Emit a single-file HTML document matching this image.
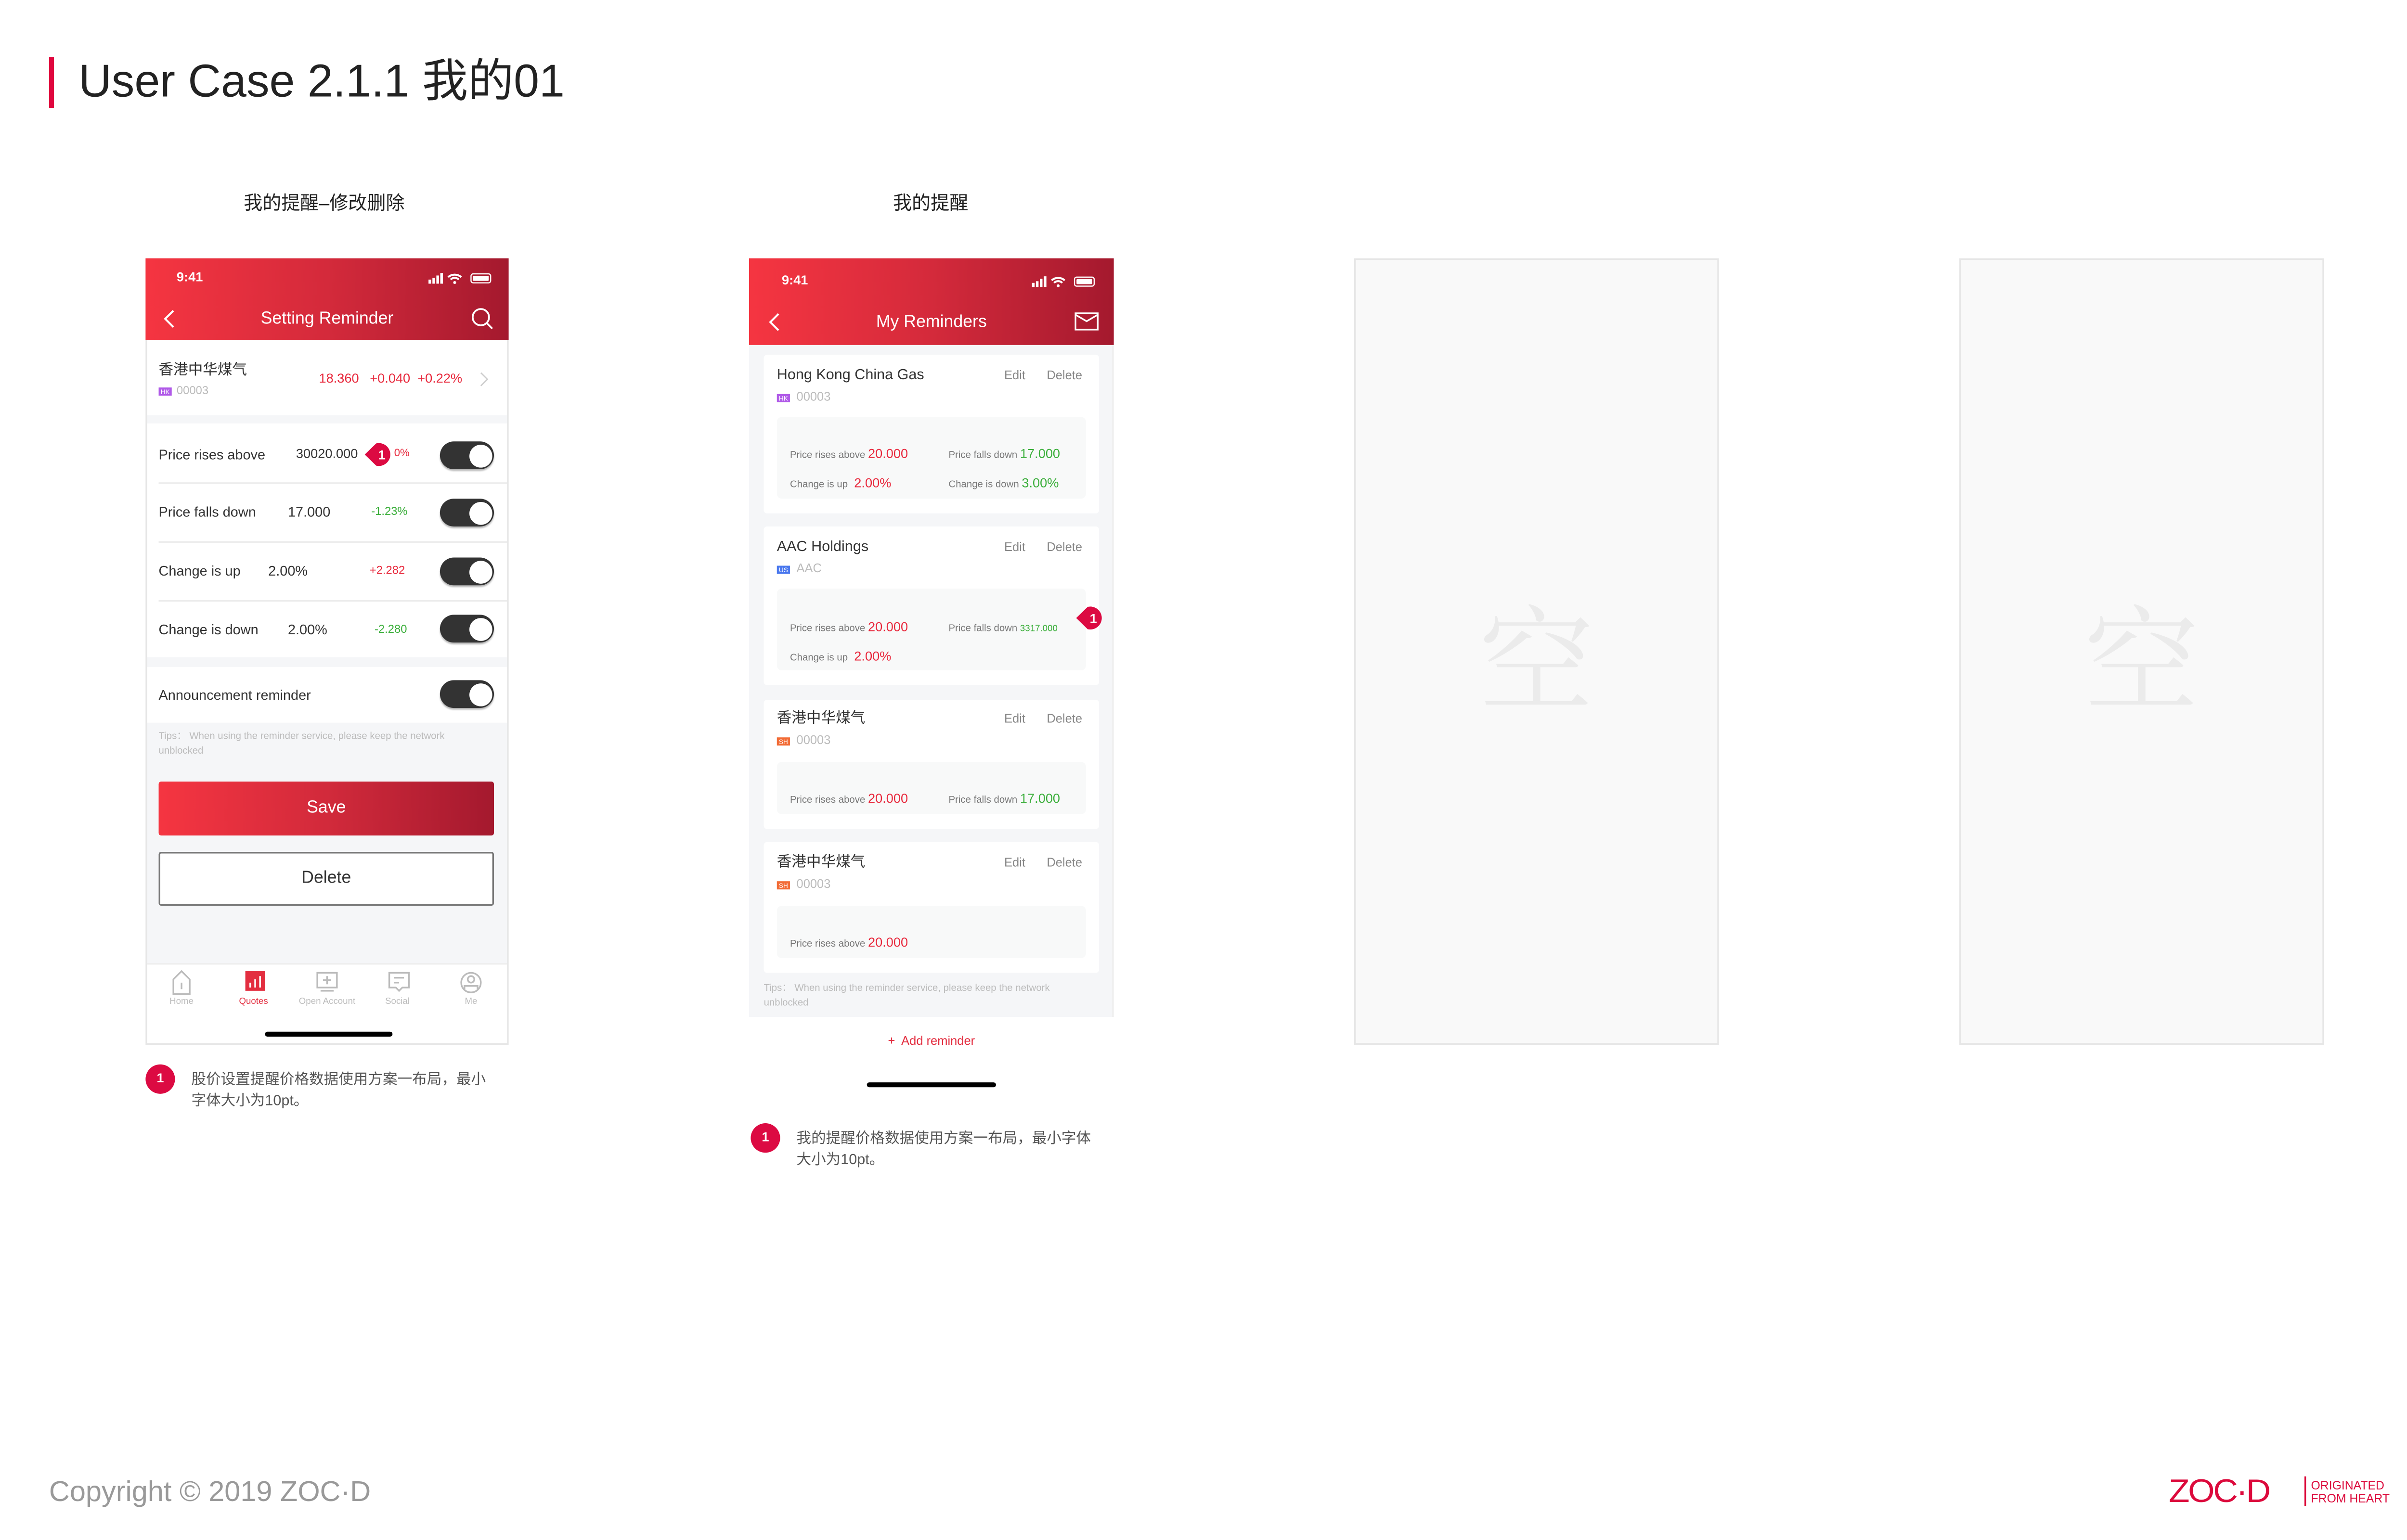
<!DOCTYPE html>
<html><head><meta charset="utf-8">
<style>
*{margin:0;padding:0;box-sizing:border-box}
html,body{width:5300px;height:3200px;overflow:hidden;background:#fff}
#w{position:absolute;left:0;top:0;width:1560px;height:942px;transform:scale(3.3974);transform-origin:0 0;font-family:"Liberation Sans","Noto Sans CJK SC",sans-serif;color:#333}
.a{position:absolute;white-space:nowrap}
.t{position:absolute;white-space:nowrap;line-height:1}
.hdr{background:linear-gradient(90deg,#f53541,#d42a3b 50%,#a4192e)}
.tog{position:absolute;width:33px;height:17px;border-radius:9px;background:#333;box-shadow:0 1px 1px rgba(0,0,0,.3)}
.tog:after{content:"";position:absolute;right:1.5px;top:1.5px;width:14px;height:14px;border-radius:50%;background:#fff}
.sep{position:absolute;height:1px;background:#ececec}
.badge{position:absolute;height:5px;width:8px;font-size:4px;line-height:5px;color:#fff;text-align:center}
.card{position:absolute;left:467px;width:205px;background:#fff;border-radius:2px}
.box{position:absolute;left:8px;width:189px;background:#f8f9f9;border-radius:3px}
.lb{font-size:6px;color:#777}
.red{color:#e8283c}.grn{color:#3aae3a}
.mk{position:absolute;width:18px;height:18px}
</style></head><body><div id="w">

<!-- Title -->
<div class="a" style="left:30px;top:35px;width:3px;height:31px;background:#e0063f"></div>
<div class="t" style="left:48px;top:36px;font-size:28px;color:#222">User Case 2.1.1 我的01</div>

<div class="t" style="left:149px;top:120px;font-size:11.5px;color:#222">我的提醒–修改删除</div>
<div class="t" style="left:546px;top:120px;font-size:11.5px;color:#222">我的提醒</div>

<!-- ========== Phone 1 ========== -->
<div class="a" style="left:89px;top:158px;width:222px;height:481px;background:#f5f6f8;border:1px solid #e6e6e6"></div>
<div class="a hdr" style="left:89px;top:158px;width:222px;height:50px"></div>
<div class="t" style="left:108px;top:166px;font-size:8px;font-weight:bold;color:#fff">9:41</div>
<svg class="a" style="left:261px;top:166px" width="42" height="9" viewBox="0 0 42 9">
 <rect x="1" y="5" width="1.6" height="2.5" fill="#fff"/><rect x="3.4" y="4" width="1.6" height="3.5" fill="#fff"/><rect x="5.8" y="2.5" width="1.6" height="5" fill="#fff"/><rect x="8.2" y="1" width="1.6" height="6.5" fill="#fff"/>
 <path d="M13 3.5a6 6 0 0 1 8 0M14.5 5a3.5 3.5 0 0 1 5 0" stroke="#fff" stroke-width="1.2" fill="none"/><circle cx="17" cy="6.8" r="0.9" fill="#fff"/>
 <rect x="27" y="1.5" width="12" height="5.5" rx="1.3" fill="none" stroke="#fff" stroke-width=".7"/><rect x="28.2" y="2.7" width="9.6" height="3.1" rx=".6" fill="#fff"/>
</svg>
<svg class="a" style="left:99px;top:189px" width="10" height="12" viewBox="0 0 10 12"><path d="M7 1L2 6l5 5" stroke="#fff" stroke-width="1.2" fill="none"/></svg>
<div class="t" style="left:89px;width:222px;text-align:center;top:190px;font-size:10.5px;color:#fff">Setting Reminder</div>
<svg class="a" style="left:288px;top:188px" width="14" height="14" viewBox="0 0 14 14"><circle cx="6" cy="6" r="5" stroke="#fff" stroke-width="1.1" fill="none"/><path d="M9.6 9.6L13 13" stroke="#fff" stroke-width="1.1"/></svg>

<div class="a" style="left:90px;top:208px;width:220px;height:46px;background:#fff"></div>
<div class="t" style="left:97px;top:222px;font-size:9px;color:#333">香港中华煤气</div>
<div class="badge" style="left:97px;top:237px;background:#b05ae8">HK</div>
<div class="t" style="left:108px;top:236px;font-size:7px;color:#bbb">00003</div>
<div class="t red" style="left:195px;top:228px;font-size:8px">18.360&nbsp;&nbsp;&nbsp;+0.040&nbsp;&nbsp;+0.22%</div>
<svg class="a" style="left:293px;top:227px" width="6" height="10" viewBox="0 0 6 10"><path d="M1 1l4 4-4 4" stroke="#ccc" stroke-width=".8" fill="none"/></svg>

<div class="a" style="left:90px;top:259px;width:220px;height:143px;background:#fff"></div>
<div class="sep" style="left:97px;top:295px;width:213px"></div>
<div class="sep" style="left:97px;top:331px;width:213px"></div>
<div class="sep" style="left:97px;top:367px;width:213px"></div>
<div class="t" style="left:97px;top:274px;font-size:8.5px">Price rises above</div>
<div class="t" style="left:181px;top:274px;font-size:8px">30020.000</div>
<div class="t red" style="left:241px;top:275px;font-size:6.5px">0%</div>
<div class="t" style="left:97px;top:309px;font-size:8.5px">Price falls down</div>
<div class="t" style="left:176px;top:309px;font-size:8.5px">17.000</div>
<div class="t grn" style="left:227px;top:310px;font-size:7px">-1.23%</div>
<div class="t" style="left:97px;top:345px;font-size:8.5px">Change is up</div>
<div class="t" style="left:164px;top:345px;font-size:8.5px">2.00%</div>
<div class="t red" style="left:226px;top:346px;font-size:7px">+2.282</div>
<div class="t" style="left:97px;top:381px;font-size:8.5px">Change is down</div>
<div class="t" style="left:176px;top:381px;font-size:8.5px">2.00%</div>
<div class="t grn" style="left:229px;top:382px;font-size:7px">-2.280</div>
<div class="tog" style="left:269px;top:270px"></div>
<div class="tog" style="left:269px;top:305px"></div>
<div class="tog" style="left:269px;top:341px"></div>
<div class="tog" style="left:269px;top:376px"></div>

<div class="a" style="left:90px;top:408px;width:220px;height:34px;background:#fff"></div>
<div class="t" style="left:97px;top:421px;font-size:8.5px">Announcement reminder</div>
<div class="tog" style="left:269px;top:416px"></div>
<div class="t" style="left:97px;top:447px;font-size:6px;color:#bbb;line-height:9px">Tips：&nbsp;When using the reminder service, please keep the network<br>unblocked</div>

<div class="a" style="left:97px;top:478px;width:205px;height:33px;border-radius:1.5px;background:linear-gradient(90deg,#f53541,#d22a3b 50%,#a4192e)"></div>
<div class="t" style="left:97px;width:205px;text-align:center;top:489px;font-size:10.5px;color:#fff">Save</div>
<div class="a" style="left:97px;top:521px;width:205px;height:33px;border:1px solid #777;border-radius:1.5px;background:#fff"></div>
<div class="t" style="left:97px;width:205px;text-align:center;top:532px;font-size:10.5px;color:#333">Delete</div>

<div class="a" style="left:90px;top:589px;width:220px;height:49px;background:#fff;border-top:1px solid #eee"></div>
<svg class="a" style="left:90px;top:593px" width="220" height="16" viewBox="0 0 220 16" fill="none" stroke="#bbb" stroke-width="1">
 <path d="M16 15V6l5-5 5 5v9z M21 8v4"/>
 <rect x="60" y="1" width="12" height="12" fill="#e32e40" stroke="none"/><path d="M63 11v-3M66 11v-5M69 11v-7" stroke="#fff"/>
 <path d="M104 2h12v9h-12z M110 4v5M107.5 6.5h5 M106 13h8"/>
 <path d="M148 2h12v9h-4l-2 2-2-2h-4z M151 5h6M151 8h3"/>
 <circle cx="198" cy="8" r="6"/><circle cx="198" cy="6" r="2"/><path d="M194 12v-2h8v2"/>
</svg>
<div class="t" style="left:90px;width:42px;text-align:center;top:611px;font-size:5.5px;color:#bbb">Home</div>
<div class="t" style="left:134px;width:42px;text-align:center;top:611px;font-size:5.5px;color:#e32e40">Quotes</div>
<div class="t" style="left:174px;width:52px;text-align:center;top:611px;font-size:5.5px;color:#bbb">Open Account</div>
<div class="t" style="left:222px;width:42px;text-align:center;top:611px;font-size:5.5px;color:#bbb">Social</div>
<div class="t" style="left:267px;width:42px;text-align:center;top:611px;font-size:5.5px;color:#bbb">Me</div>
<div class="a" style="left:162px;top:631px;width:78px;height:2.5px;border-radius:2px;background:#000"></div>

<!-- marker 1 -->
<svg class="mk" style="left:222px;top:269px" viewBox="0 0 18 18"><path d="M1 9L8 2.2A7 7 0 1 1 8 15.8z" fill="#dc0a42"/><text x="11.5" y="12" font-size="8" fill="#fff" text-anchor="middle" font-family="Liberation Sans" font-weight="bold">1</text></svg>

<div class="a" style="left:89px;top:651px;width:18px;height:18px;border-radius:50%;background:#dc0a42"></div>
<div class="t" style="left:89px;width:18px;text-align:center;top:656px;font-size:8px;color:#fff;font-weight:bold">1</div>
<div class="t" style="left:117px;top:654px;font-size:9px;color:#555;line-height:13px">股价设置提醒价格数据使用方案一布局，最小<br>字体大小为10pt。</div>

<!-- ========== Phone 2 ========== -->
<div class="a" style="left:458px;top:158px;width:223px;height:464px;background:#f5f6f8;border-right:1px solid #eee"></div>
<div class="a" style="left:458px;top:622px;width:223px;height:50px;background:#fff"></div>
<div class="a hdr" style="left:458px;top:158px;width:223px;height:53px"></div>
<div class="t" style="left:478px;top:168px;font-size:8px;font-weight:bold;color:#fff">9:41</div>
<svg class="a" style="left:630px;top:168px" width="42" height="9" viewBox="0 0 42 9">
 <rect x="1" y="5" width="1.6" height="2.5" fill="#fff"/><rect x="3.4" y="4" width="1.6" height="3.5" fill="#fff"/><rect x="5.8" y="2.5" width="1.6" height="5" fill="#fff"/><rect x="8.2" y="1" width="1.6" height="6.5" fill="#fff"/>
 <path d="M13 3.5a6 6 0 0 1 8 0M14.5 5a3.5 3.5 0 0 1 5 0" stroke="#fff" stroke-width="1.2" fill="none"/><circle cx="17" cy="6.8" r="0.9" fill="#fff"/>
 <rect x="27" y="1.5" width="12" height="5.5" rx="1.3" fill="none" stroke="#fff" stroke-width=".7"/><rect x="28.2" y="2.7" width="9.6" height="3.1" rx=".6" fill="#fff"/>
</svg>
<svg class="a" style="left:469px;top:191px" width="10" height="12" viewBox="0 0 10 12"><path d="M7 1L2 6l5 5" stroke="#fff" stroke-width="1.2" fill="none"/></svg>
<div class="t" style="left:458px;width:223px;text-align:center;top:192px;font-size:10.5px;color:#fff">My Reminders</div>
<svg class="a" style="left:657px;top:191px" width="15" height="12" viewBox="0 0 15 12"><rect x=".6" y=".6" width="13.6" height="10" fill="none" stroke="#fff" stroke-width="1"/><path d="M.6 1.5l6.8 4 6.8-4" stroke="#fff" stroke-width="1" fill="none"/></svg>

<!-- card 1 -->
<div class="card" style="top:217px;height:97px">
 <div class="box" style="top:38px;height:50px"></div>
</div>
<div class="t" style="left:475px;top:225px;font-size:9px">Hong Kong China Gas</div>
<div class="t" style="left:614px;top:226px;font-size:7.5px;color:#888">Edit</div>
<div class="t" style="left:640px;top:226px;font-size:7.5px;color:#888">Delete</div>
<div class="badge" style="left:475px;top:241px;background:#b05ae8">HK</div>
<div class="t" style="left:487px;top:239px;font-size:7.5px;color:#bbb">00003</div>
<div class="t" style="left:483px;top:268px"><span class="lb">Price rises above </span><span class="red" style="font-size:8px">20.000</span></div>
<div class="t" style="left:580px;top:268px"><span class="lb">Price falls down </span><span class="grn" style="font-size:8px">17.000</span></div>
<div class="t" style="left:483px;top:286px"><span class="lb">Change is up </span><span class="red" style="font-size:8px">&nbsp;2.00%</span></div>
<div class="t" style="left:580px;top:286px"><span class="lb">Change is down </span><span class="grn" style="font-size:8px">3.00%</span></div>

<!-- card 2 -->
<div class="card" style="top:322px;height:97px">
 <div class="box" style="top:38px;height:50px"></div>
</div>
<div class="t" style="left:475px;top:330px;font-size:9px">AAC Holdings</div>
<div class="t" style="left:614px;top:331px;font-size:7.5px;color:#888">Edit</div>
<div class="t" style="left:640px;top:331px;font-size:7.5px;color:#888">Delete</div>
<div class="badge" style="left:475px;top:346px;background:#4a78ee">US</div>
<div class="t" style="left:487px;top:344px;font-size:7.5px;color:#bbb">AAC</div>
<div class="t" style="left:483px;top:374px"><span class="lb">Price rises above </span><span class="red" style="font-size:8px">20.000</span></div>
<div class="t" style="left:580px;top:374px"><span class="lb">Price falls down </span><span class="grn" style="font-size:5.5px">3317.000</span></div>
<div class="t" style="left:483px;top:392px"><span class="lb">Change is up </span><span class="red" style="font-size:8px">&nbsp;2.00%</span></div>
<svg class="mk" style="left:657px;top:369px" viewBox="0 0 18 18"><path d="M1 9L8 2.2A7 7 0 1 1 8 15.8z" fill="#dc0a42"/><text x="11.5" y="12" font-size="8" fill="#fff" text-anchor="middle" font-family="Liberation Sans" font-weight="bold">1</text></svg>

<!-- card 3 -->
<div class="card" style="top:428px;height:79px">
 <div class="box" style="top:38px;height:32px"></div>
</div>
<div class="t" style="left:475px;top:435px;font-size:9px">香港中华煤气</div>
<div class="t" style="left:614px;top:436px;font-size:7.5px;color:#888">Edit</div>
<div class="t" style="left:640px;top:436px;font-size:7.5px;color:#888">Delete</div>
<div class="badge" style="left:475px;top:451px;background:#f26b35">SH</div>
<div class="t" style="left:487px;top:449px;font-size:7.5px;color:#bbb">00003</div>
<div class="t" style="left:483px;top:479px"><span class="lb">Price rises above </span><span class="red" style="font-size:8px">20.000</span></div>
<div class="t" style="left:580px;top:479px"><span class="lb">Price falls down </span><span class="grn" style="font-size:8px">17.000</span></div>

<!-- card 4 -->
<div class="card" style="top:515px;height:80px">
 <div class="box" style="top:39px;height:32px"></div>
</div>
<div class="t" style="left:475px;top:523px;font-size:9px">香港中华煤气</div>
<div class="t" style="left:614px;top:524px;font-size:7.5px;color:#888">Edit</div>
<div class="t" style="left:640px;top:524px;font-size:7.5px;color:#888">Delete</div>
<div class="badge" style="left:475px;top:539px;background:#f26b35">SH</div>
<div class="t" style="left:487px;top:537px;font-size:7.5px;color:#bbb">00003</div>
<div class="t" style="left:483px;top:567px"><span class="lb">Price rises above </span><span class="red" style="font-size:8px">20.000</span></div>

<div class="t" style="left:467px;top:601px;font-size:6px;color:#bbb;line-height:8.5px">Tips：&nbsp;When using the reminder service, please keep the network<br>unblocked</div>
<div class="t" style="left:458px;width:223px;text-align:center;top:633px;font-size:7.5px;color:#e32e40">+&nbsp; Add reminder</div>
<div class="a" style="left:530px;top:662px;width:79px;height:2.5px;border-radius:2px;background:#000"></div>

<div class="a" style="left:459px;top:687px;width:18px;height:18px;border-radius:50%;background:#dc0a42"></div>
<div class="t" style="left:459px;width:18px;text-align:center;top:692px;font-size:8px;color:#fff;font-weight:bold">1</div>
<div class="t" style="left:487px;top:690px;font-size:9px;color:#555;line-height:13px">我的提醒价格数据使用方案一布局，最小字体<br>大小为10pt。</div>

<!-- placeholders -->
<div class="a" style="left:828px;top:158px;width:223px;height:481px;background:#f9f9f9;border:1px solid #e6e6e6"></div>
<div class="t" style="left:828px;width:223px;text-align:center;top:365px;font-size:70px;color:#ebebeb;font-family:'Noto Serif CJK SC',serif">空</div>
<div class="a" style="left:1198px;top:158px;width:223px;height:481px;background:#f9f9f9;border:1px solid #e6e6e6"></div>
<div class="t" style="left:1198px;width:223px;text-align:center;top:365px;font-size:70px;color:#ebebeb;font-family:'Noto Serif CJK SC',serif">空</div>

<!-- footer -->
<div class="t" style="left:30px;top:904px;font-size:17.5px;color:#999">Copyright © 2019 ZOC·D</div>
<div class="t" style="left:1326px;top:902px;font-size:21px;color:#dc0a3c;letter-spacing:-1px;transform:scaleY(.95)">ZOC·D</div>
<div class="a" style="left:1409px;top:903px;width:.5px;height:18px;background:#dc0a3c"></div>
<div class="t" style="left:1413px;top:905px;font-size:7.3px;color:#dc0a3c;line-height:8px">ORIGINATED<br>FROM HEART</div>
<div class="a" style="left:1493px;top:904px;width:.5px;height:17px;background:#ddd"></div>
<div class="t" style="left:1516px;top:904px;font-size:18px;color:#d6d6d6">03</div>

</div></body></html>
